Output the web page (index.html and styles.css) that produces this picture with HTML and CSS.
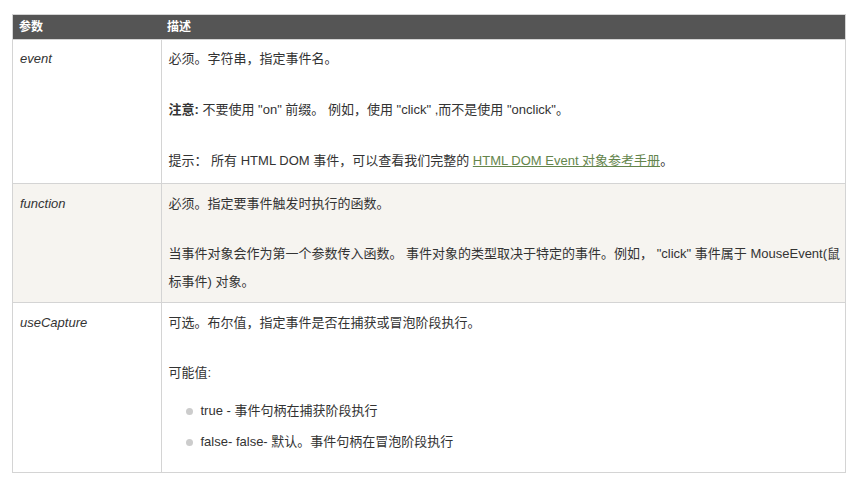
FILE: index.html
```html
<!DOCTYPE html>
<html lang="zh-CN">
<head>
    <meta charset="UTF-8">
    <meta name="viewport" content="width=device-width, initial-scale=1.0">
    <title>addEventListener 参数</title>
    <link rel="stylesheet" href="styles.css">
</head>
<body>
    <div class="page">
        <table class="reference">
            <thead>
                <tr>
                    <th class="col-name">参数</th>
                    <th>描述</th>
                </tr>
            </thead>
            <tbody>
                <tr class="first">
                    <td class="param"><i>event</i></td>
                    <td>
                        <p>必须。字符串，指定事件名。</p>
                        <p><b>注意:</b> 不要使用 "on" 前缀。 例如，使用 "click" ,而不是使用 "onclick"。</p>
                        <p>提示： 所有 HTML DOM 事件，可以查看我们完整的 <a href="#">HTML DOM Event 对象参考手册</a>。</p>
                    </td>
                </tr>
                <tr class="alt">
                    <td class="param"><i>function</i></td>
                    <td>
                        <p>必须。指定要事件触发时执行的函数。</p>
                        <p>当事件对象会作为第一个参数传入函数。 事件对象的类型取决于特定的事件。例如， "click" 事件属于 MouseEvent(鼠标事件) 对象。</p>
                    </td>
                </tr>
                <tr class="last">
                    <td class="param"><i>useCapture</i></td>
                    <td>
                        <p>可选。布尔值，指定事件是否在捕获或冒泡阶段执行。</p>
                        <p class="lead">可能值:</p>
                        <ul>
                            <li>true - 事件句柄在捕获阶段执行</li>
                            <li>false- false- 默认。事件句柄在冒泡阶段执行</li>
                        </ul>
                    </td>
                </tr>
            </tbody>
        </table>
    </div>
</body>
</html>
```

FILE: styles.css
```css
body {
    font-family: Arial, "Liberation Sans", "Noto Sans CJK SC", sans-serif;
    font-size: 13px;
    margin: 0;
    padding: 0;
    background-color: #fff;
    color: #333;
}
.page {
    padding: 14px 7px 0 12px;
}
.reference {
    width: 100%;
    border-collapse: collapse;
    border: 1px solid #d4d4d4;
}
.reference th {
    background-color: #555;
    color: #fff;
    font-size: 12px;
    font-weight: bold;
    text-align: left;
    height: 24px;
    padding: 0 6px;
    line-height: 24px;
}
.reference .col-name {
    width: 136px;
}
.reference td {
    vertical-align: top;
    padding: 5px 0 9px 7px;
    line-height: 28px;
    border: 1px solid #d4d4d4;
}
.reference tr.first td {
    padding-bottom: 8px;
}
.reference tr.first td p {
    margin-bottom: 23px;
}
.reference tr.alt td {
    background-color: #f6f4f0;
    padding-top: 6px;
    padding-bottom: 6px;
}
.reference tr.last td {
    padding-top: 6px;
    padding-bottom: 9px;
}
.reference td p {
    margin: 0 0 22px;
}
.reference td p:last-child,
.reference td p.lead {
    margin-bottom: 0 !important;
}
.reference a {
    color: #64854c;
}
.reference ul {
    margin: 10px 0 7px;
    padding-left: 32px;
    list-style: none;
}
.reference li {
    position: relative;
    margin-bottom: 3px;
}
.reference li::before {
    content: "";
    position: absolute;
    left: -15px;
    top: 11px;
    width: 7px;
    height: 7px;
    border-radius: 50%;
    background-color: #ccc;
}
```
